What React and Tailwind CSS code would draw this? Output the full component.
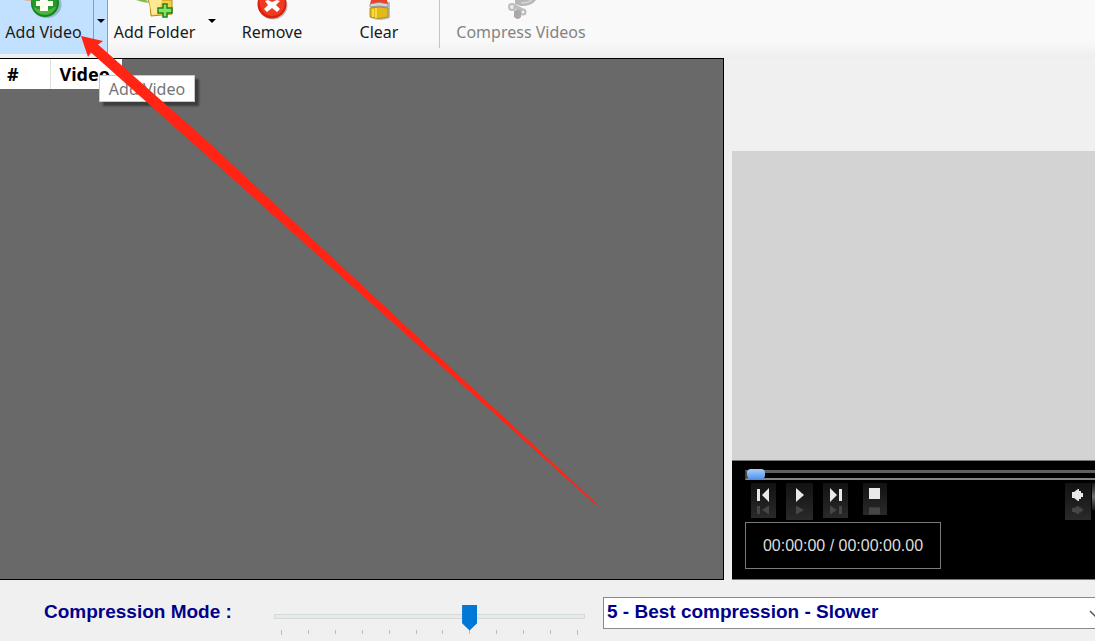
import React from "react";

function AddVideoIcon() {
  return (
    <svg width="48" height="20" viewBox="0 0 48 20" className="block" aria-hidden="true">
      <path d="M3 0H20V1H12Q7 1 3 0Z" fill="#e0ad7c" />
      <ellipse cx="26.500" cy="4.500" rx="15" ry="13.500" fill="#5f8e93" opacity=".5" />
      <circle cx="25" cy="3" r="14" fill="#158320" />
      <circle cx="24.500" cy="2" r="12.500" fill="#249b29" />
      <path d="M13 7Q25 14 37 6Q33 15 25 15Q17 15 13 7Z" fill="#67cf50" opacity=".55" />
      <path d="M20 0H28V1H33V6H28V11H20V6H16V1H20Z" fill="#fffef1" />
    </svg>
  );
}

function AddFolderIcon() {
  return (
    <svg width="48" height="20" viewBox="0 0 48 20" className="block" aria-hidden="true">
      <path d="M5 0H15L18 3Q10 2 5 0Z" fill="#7fbd47" />
      <path d="M17 0H41L41 14L20 16L19 5Z" fill="#f5cf45" stroke="#b98b19" />
      <path d="M18 0H31L27 14L21 15Z" fill="#ffe994" />
      <path d="M32 4H36V8H41V13H36V17H32V13H27V8H32Z" fill="#83e45f" stroke="#23811c" strokeWidth="1.500" />
    </svg>
  );
}

function RemoveIcon() {
  return (
    <svg width="48" height="20" viewBox="0 0 48 20" className="block" aria-hidden="true">
      <ellipse cx="25" cy="6" rx="14.500" ry="13.500" fill="#777" opacity=".45" />
      <circle cx="24" cy="4" r="14.500" fill="#d92010" />
      <path d="M11 0H37Q37 15 24 16Q12 15 11 0Z" fill="#ef3a20" />
      <path d="M20 0L24 2L29 0L32 1L28 5L32 9L29 12L24 8L19 12L16 9L20 5L17 1Z" fill="#fff" />
    </svg>
  );
}

function ClearIcon() {
  return (
    <svg width="48" height="20" viewBox="0 0 48 20" className="block" aria-hidden="true">
      <path d="M16 2H35V18Q25 22 16 18Z" fill="#777" opacity=".45" />
      <path d="M16 0H32L33 4H15Z" fill="#ef4027" />
      <path d="M15 4Q24 1 33 4V7Q24 5 15 7Z" fill="#d3d6da" stroke="#85878b" strokeWidth=".7" />
      <path d="M15 8Q24 6 33 8V17Q24 20 15 17Z" fill="#e3b91a" stroke="#a48316" strokeWidth=".8" />
      <path d="M18 9V17M21 8V18" stroke="#f7dd43" strokeWidth="2" />
    </svg>
  );
}

function CompressIcon() {
  return (
    <svg width="48" height="20" viewBox="0 0 48 20" className="block" aria-hidden="true">
      <path d="M39 0Q35 6 24 6L18 4V0Z" fill="#b5b5b5" />
      <path d="M35 0Q31 3 24 3" fill="none" stroke="#d0d0d0" strokeWidth="2" />
      <circle cx="15" cy="7" r="3" fill="#efefef" stroke="#bcbcbc" strokeWidth="2" />
      <path d="M17 6L25 10" stroke="#bcbcbc" strokeWidth="4" />
      <circle cx="26" cy="12" r="2.500" fill="#efefef" stroke="#bcbcbc" strokeWidth="2" />
      <path d="M17 11Q20 8 24 11V17Q21 21 17 17Z" fill="#a9a9a9" />
    </svg>
  );
}

function Tool({ icon, label, className, disabled }) {
  return (
    <button
      type="button"
      disabled={disabled}
      className={"flex h-full shrink-0 flex-col items-center whitespace-nowrap text-base leading-6 disabled:text-[#838383] " + className}
    >
      {icon}
      <span>{label}</span>
    </button>
  );
}

function Caret() {
  return (
    <svg width="8" height="4" viewBox="0 0 8 4" aria-hidden="true">
      <path d="M0 0H8L4 4Z" fill="#000" />
    </svg>
  );
}

const GLYPHS = {
  previous: "M-7 -6H-4V6H-7ZM5 -7V7L-2 0Z",
  play: "M-4 -7L4 0L-4 7Z",
  next: "M-6 -7V7L1 0ZM3 -6H6V6H3Z",
  stop: "M-6 -7H5V4H-6Z",
  volume: "M-6 -3H-4L0 -6H1V-4H3V-2H5V2H3V4H1V6H0L-4 3H-6Z",
};

function MediaButton({ label, glyph, className }) {
  return (
    <button type="button" aria-label={label} className={"flex shrink-0 justify-center overflow-hidden bg-linear-to-b from-[#121212] to-[#2a2a2a] " + className}>
      <svg width="24" height="36" viewBox="-12 -12 24 36" className="shrink-0" aria-hidden="true">
        <path d={GLYPHS[glyph]} fill="#e9e9e9" />
        <path d={GLYPHS[glyph]} fill="#464646" transform="translate(0 15) scale(1 -.65)" />
      </svg>
    </button>
  );
}

function Toolbar() {
  return (
    <header className="flex h-[58px] shrink-0 overflow-hidden bg-linear-to-b from-[#f9f9f9] from-70% to-[#eeeeee]">
      <div className="flex h-[54px] shrink-0 bg-[#c2e0ff]">
        <Tool icon={<AddVideoIcon />} label="Add Video" className="w-[93px] pr-[6px]" />
        <button type="button" aria-label="Add video options" className="flex w-[15px] items-start justify-center border-x border-[#5aa7f3] pt-[19px]">
          <Caret />
        </button>
      </div>
      <Tool icon={<AddFolderIcon />} label="Add Folder" className="w-[93px]" />
      <button type="button" aria-label="Add folder options" className="flex w-[22px] items-start justify-center pt-[19px]">
        <Caret />
      </button>
      <Tool icon={<RemoveIcon />} label="Remove" className="w-[98px]" />
      <Tool icon={<ClearIcon />} label="Clear" className="mr-[2px] w-[116px]" />
      <div className="h-12 w-px bg-[#c4c4c4]" />
      <Tool icon={<CompressIcon />} label="Compress Videos" className="w-[162px]" disabled />
    </header>
  );
}

function VideoList() {
  return (
    <section className="min-w-0 flex-1 border-y border-r border-black bg-[#696969]">
      <table className="border-collapse bg-white text-lg font-bold text-black">
        <thead>
          <tr className="h-[30px] leading-6">
            <th className="w-[50px] border-r border-[#e0e0e0] pl-[7px] text-left">#</th>
            <th className="w-[72px] pl-[9px] text-left">Video</th>
          </tr>
        </thead>
      </table>
    </section>
  );
}

function Player() {
  return (
    <section className="flex w-[363px] shrink-0 flex-col overflow-hidden">
      <div className="mt-[93px] flex-1 bg-[#d3d3d3]" />
      <div className="flex h-[120px] flex-col items-start overflow-hidden border-y border-[#777] bg-black pl-[13px]">
        <input
          type="range"
          aria-label="Seek"
          min="0"
          max="100"
          defaultValue="0"
          className="mt-2 block h-3 w-[400px] shrink-0 appearance-none bg-transparent [&::-webkit-slider-runnable-track]:h-[10px] [&::-webkit-slider-runnable-track]:border-t-[3px] [&::-webkit-slider-runnable-track]:border-b-2 [&::-webkit-slider-runnable-track]:border-l-2 [&::-webkit-slider-runnable-track]:border-t-[#5f5f5f] [&::-webkit-slider-runnable-track]:border-b-[#858585] [&::-webkit-slider-runnable-track]:border-l-[#444] [&::-webkit-slider-thumb]:-mt-[4px] [&::-webkit-slider-thumb]:h-[10px] [&::-webkit-slider-thumb]:w-[18px] [&::-webkit-slider-thumb]:appearance-none [&::-webkit-slider-thumb]:rounded-[4px] [&::-webkit-slider-thumb]:bg-linear-to-b [&::-webkit-slider-thumb]:from-[#a9cdfa] [&::-webkit-slider-thumb]:to-[#5394ea]"
        />
        <div className="mt-[2px] flex h-[39px] w-full shrink-0 items-start pl-[6px]">
          <MediaButton label="Previous" glyph="previous" className="mr-[10px] h-[35px] w-[25px]" />
          <MediaButton label="Play" glyph="play" className="mr-[10px] h-[37px] w-[27px]" />
          <MediaButton label="Next" glyph="next" className="mr-[15px] h-[35px] w-[25px]" />
          <MediaButton label="Stop" glyph="stop" className="h-[32px] w-[24px]" />
          <MediaButton label="Mute" glyph="volume" className="ml-auto h-[37px] w-[26px]" />
          <div className="ml-px h-[27px] w-[3px] bg-linear-to-b from-[#181818] via-[#707070] to-[#181818]" />
        </div>
        <div className="flex h-[47px] w-[196px] shrink-0 items-center justify-center border border-[#7a7a7a] font-['Liberation_Sans',Arial,sans-serif] text-base text-[#dcdcdc]">
          00:00:00 / 00:00:00.00
        </div>
      </div>
    </section>
  );
}

const TICKS = Array.from({ length: 12 }, (_, i) => i);

function CompressionBar() {
  return (
    <footer className="flex h-[61px] shrink-0 items-start overflow-hidden pl-11 font-['Liberation_Sans',Arial,sans-serif] text-[19px] font-bold text-[#00008b]">
      <label htmlFor="mode" className="w-[230px] shrink-0 pt-[18px] leading-7">Compression Mode :</label>
      <div className="w-[311px] shrink-0 pt-[22px]">
        <input
          type="range"
          aria-label="Compression level"
          min="0"
          max="11"
          defaultValue="7"
          className="block h-[28px] w-full appearance-none bg-transparent [&::-webkit-slider-runnable-track]:h-[5px] [&::-webkit-slider-runnable-track]:border [&::-webkit-slider-runnable-track]:border-[#d6d9d9] [&::-webkit-slider-runnable-track]:bg-[#e7eaea] [&::-webkit-slider-thumb]:-mt-[10px] [&::-webkit-slider-thumb]:h-[26px] [&::-webkit-slider-thumb]:w-[15px] [&::-webkit-slider-thumb]:appearance-none [&::-webkit-slider-thumb]:bg-[#0078d7] [&::-webkit-slider-thumb]:[clip-path:polygon(0_0,100%_0,100%_72%,50%_100%,0_72%)]"
        />
        <div className="flex justify-between px-[7px]" aria-hidden="true">
          {TICKS.map((i) => (
            <span key={i} className={"w-px bg-[#bdbdbd] " + (i === 0 || i === 11 ? "h-[5px]" : "h-[4px]")} />
          ))}
        </div>
      </div>
      <div className="relative -mr-[12px] ml-[18px] flex-1 pt-[17px]">
        <select id="mode" className="block h-8 w-full appearance-none border border-[#8a8a8a] bg-white pb-[2px] pl-[3px]">
          <option>5 - Best compression - Slower</option>
        </select>
        <svg width="12" height="8" viewBox="0 0 12 8" className="pointer-events-none absolute right-[6px] top-[30px]" aria-hidden="true">
          <path d="M1 1L6 6L11 1" fill="none" stroke="#555" strokeWidth="1.500" />
        </svg>
      </div>
    </footer>
  );
}

export default function App() {
  return (
    <div className="relative flex h-screen flex-col overflow-hidden bg-[#f0f0f0] font-['Noto_Sans',sans-serif] text-[#1a1a1a]">
      <Toolbar />
      <main className="flex min-h-0 flex-1 gap-2">
        <VideoList />
        <Player />
      </main>
      <CompressionBar />
      <div role="tooltip" className="absolute left-[99px] top-[75px] flex h-[27px] w-24 items-center justify-center border border-[#c8c8c8] bg-white text-base text-[#757575] shadow-[4px_4px_2px_#3c3c3c]">
        Add Video
      </div>
      <svg width="600" height="510" viewBox="0 0 600 510" className="pointer-events-none absolute left-0 top-0" aria-hidden="true">
        <path d="M81 36L103 41L98 44.500L206 140L597 504L596 505L206 155L91 52.500L88 57Z" fill="#ff2413" />
      </svg>
    </div>
  );
}
